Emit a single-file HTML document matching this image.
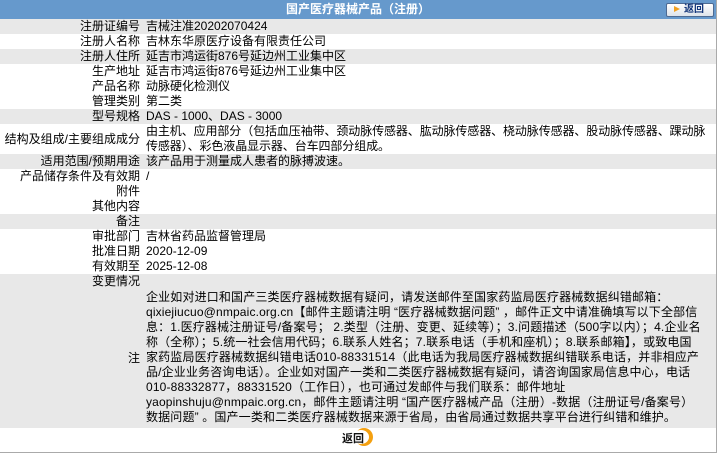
<!DOCTYPE html>
<html><head><meta charset="utf-8"><style>
body{margin:0;width:724px;height:458px;background:#fff;font-family:"Liberation Sans","Noto Sans CJK SC",sans-serif;font-size:12px;color:#000;position:relative;overflow:hidden}
.wrap{position:absolute;left:0;top:0;width:716px;height:452px;border-right:1px solid #aaa;border-bottom:1px solid #aaa}
.hd{height:19px;background:#6699cc;color:#fff;font-weight:bold;text-align:center;line-height:19px;font-size:12px;position:relative}
.btn{position:absolute;left:666px;top:3px;width:46px;height:12px;border:1px solid #4d6a92;background:linear-gradient(#fff,#dde3ea);border-radius:2px;color:#12357a;font-size:10px;font-weight:bold;line-height:12px;text-align:left}
.btn i{display:inline-block;width:0;height:0;border-left:6px solid #f0a020;border-top:3px solid transparent;border-bottom:3px solid transparent;margin:0 4px 0 7px;vertical-align:0}
table{border-collapse:collapse;width:716px;table-layout:fixed}
td{padding:0;line-height:15px;height:15px;vertical-align:middle}
td.l{text-align:right;padding-right:6px;white-space:nowrap;overflow:visible}
td.v{padding-right:6px}
td.n{white-space:nowrap;letter-spacing:0.15px}
td.s{white-space:nowrap;letter-spacing:-0.1px}
tr.g td{background:#e8e8e8}
.bb{position:absolute;left:339px;top:427px;width:60px;height:20px}
.bb span{position:absolute;left:3px;top:3px;font-size:11px;font-weight:bold;color:#111;z-index:2}
.bb b{position:absolute;left:16px;top:1px;width:18px;height:18px;border-radius:50%;background:#f4a010}
.bb em{position:absolute;left:14px;top:3px;width:16px;height:14px;border-radius:50%;background:#fff}
</style></head><body>
<div class="wrap">
<div class="hd">国产医疗器械产品（注册）<div class="btn"><i></i>返回</div></div>
<table>
<colgroup><col style="width:146px"><col></colgroup>
<tr class="g"><td class="l">注册证编号</td><td class="v">吉械注准20202070424</td></tr>
<tr><td class="l">注册人名称</td><td class="v">吉林东华原医疗设备有限责任公司</td></tr>
<tr class="g"><td class="l">注册人住所</td><td class="v">延吉市鸿运街876号延边州工业集中区</td></tr>
<tr><td class="l">生产地址</td><td class="v">延吉市鸿运街876号延边州工业集中区</td></tr>
<tr><td class="l">产品名称</td><td class="v">动脉硬化检测仪</td></tr>
<tr><td class="l">管理类别</td><td class="v">第二类</td></tr>
<tr class="g"><td class="l">型号规格</td><td class="v">DAS - 1000、DAS - 3000</td></tr>
<tr><td class="l">结构及组成/主要组成成分</td><td class="v s">由主机、应用部分（包括血压袖带、颈动脉传感器、肱动脉传感器、桡动脉传感器、股动脉传感器、踝动脉<br>传感器）、彩色液晶显示器、台车四部分组成。</td></tr>
<tr class="g"><td class="l">适用范围/预期用途</td><td class="v">该产品用于测量成人患者的脉搏波速。</td></tr>
<tr><td class="l">产品储存条件及有效期</td><td class="v">/</td></tr>
<tr><td class="l">附件</td><td class="v"></td></tr>
<tr><td class="l">其他内容</td><td class="v"></td></tr>
<tr class="g"><td class="l">备注</td><td class="v"></td></tr>
<tr><td class="l">审批部门</td><td class="v">吉林省药品监督管理局</td></tr>
<tr><td class="l">批准日期</td><td class="v">2020-12-09</td></tr>
<tr><td class="l">有效期至</td><td class="v">2025-12-08</td></tr>
<tr class="g"><td class="l">变更情况</td><td class="v"></td></tr>
<tr class="g"><td class="l">注</td><td class="v n" style="padding-top:1px;padding-bottom:3px">企业如对进口和国产三类医疗器械数据有疑问，请发送邮件至国家药监局医疗器械数据纠错邮箱：<br>qixiejiucuo@nmpaic.org.cn【邮件主题请注明 “医疗器械数据问题” ，邮件正文中请准确填写以下全部信<br>息：1.医疗器械注册证号/备案号； 2.类型（注册、变更、延续等）；3.问题描述（500字以内）；4.企业名<br>称（全称）；5.统一社会信用代码；6.联系人姓名；7.联系电话（手机和座机）；8.联系邮箱】，或致电国<br>家药监局医疗器械数据纠错电话010-88331514（此电话为我局医疗器械数据纠错联系电话，并非相应产<br>品/企业业务咨询电话）。企业如对国产一类和二类医疗器械数据有疑问，请咨询国家局信息中心，电话<br>010-88332877，88331520（工作日），也可通过发邮件与我们联系：邮件地址<br>yaopinshuju@nmpaic.org.cn，邮件主题请注明 “国产医疗器械产品（注册）-数据（注册证号/备案号）<br>数据问题” 。国产一类和二类医疗器械数据来源于省局，由省局通过数据共享平台进行纠错和维护。</td></tr>
</table>
<div class="bb"><b></b><em></em><span>返回</span></div>
</div>
</body></html>
